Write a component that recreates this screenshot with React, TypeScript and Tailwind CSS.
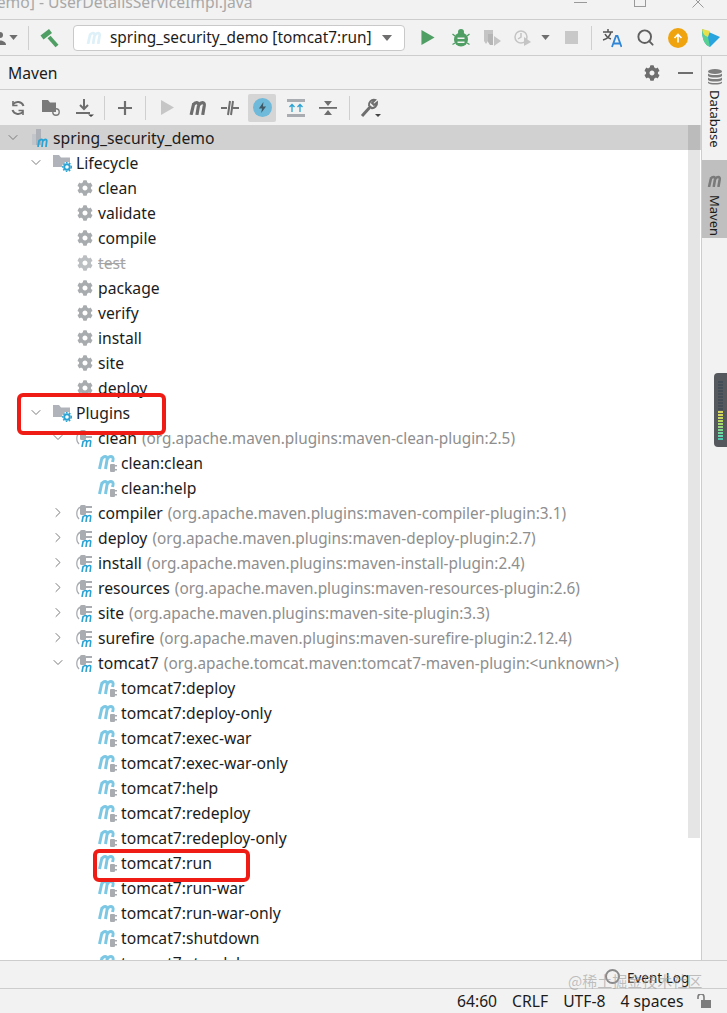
import { ChevronDown, ChevronRight, Search } from 'lucide-react'
import React from 'react'
import { FaCog } from 'react-icons/fa'

type Row = {
  level: 0 | 1 | 2 | 3
  name: string
  detail?: string
  icon: 'module' | 'folder' | 'gear' | 'plugin' | 'goal'
  open?: boolean
  closed?: boolean
  muted?: boolean
}

const rows: Row[] = [
  { level: 0, name: 'spring_security_demo', icon: 'module', open: true },
  { level: 1, name: 'Lifecycle', icon: 'folder', open: true },
  { level: 2, name: 'clean', icon: 'gear' },
  { level: 2, name: 'validate', icon: 'gear' },
  { level: 2, name: 'compile', icon: 'gear' },
  { level: 2, name: 'test', icon: 'gear', muted: true },
  { level: 2, name: 'package', icon: 'gear' },
  { level: 2, name: 'verify', icon: 'gear' },
  { level: 2, name: 'install', icon: 'gear' },
  { level: 2, name: 'site', icon: 'gear' },
  { level: 2, name: 'deploy', icon: 'gear' },
  { level: 1, name: 'Plugins', icon: 'folder', open: true },
  { level: 2, name: 'clean', detail: '(org.apache.maven.plugins:maven-clean-plugin:2.5)', icon: 'plugin', open: true },
  { level: 3, name: 'clean:clean', icon: 'goal' },
  { level: 3, name: 'clean:help', icon: 'goal' },
  { level: 2, name: 'compiler', detail: '(org.apache.maven.plugins:maven-compiler-plugin:3.1)', icon: 'plugin', closed: true },
  { level: 2, name: 'deploy', detail: '(org.apache.maven.plugins:maven-deploy-plugin:2.7)', icon: 'plugin', closed: true },
  { level: 2, name: 'install', detail: '(org.apache.maven.plugins:maven-install-plugin:2.4)', icon: 'plugin', closed: true },
  { level: 2, name: 'resources', detail: '(org.apache.maven.plugins:maven-resources-plugin:2.6)', icon: 'plugin', closed: true },
  { level: 2, name: 'site', detail: '(org.apache.maven.plugins:maven-site-plugin:3.3)', icon: 'plugin', closed: true },
  { level: 2, name: 'surefire', detail: '(org.apache.maven.plugins:maven-surefire-plugin:2.12.4)', icon: 'plugin', closed: true },
  { level: 2, name: 'tomcat7', detail: '(org.apache.tomcat.maven:tomcat7-maven-plugin:<unknown>)', icon: 'plugin', open: true },
  { level: 3, name: 'tomcat7:deploy', icon: 'goal' },
  { level: 3, name: 'tomcat7:deploy-only', icon: 'goal' },
  { level: 3, name: 'tomcat7:exec-war', icon: 'goal' },
  { level: 3, name: 'tomcat7:exec-war-only', icon: 'goal' },
  { level: 3, name: 'tomcat7:help', icon: 'goal' },
  { level: 3, name: 'tomcat7:redeploy', icon: 'goal' },
  { level: 3, name: 'tomcat7:redeploy-only', icon: 'goal' },
  { level: 3, name: 'tomcat7:run', icon: 'goal' },
  { level: 3, name: 'tomcat7:run-war', icon: 'goal' },
  { level: 3, name: 'tomcat7:run-war-only', icon: 'goal' },
  { level: 3, name: 'tomcat7:shutdown', icon: 'goal' },
  { level: 3, name: 'tomcat7:standalone', icon: 'goal' },
]

const levelPadding = {
  0: 'pl-[5px]',
  1: 'pl-[28px]',
  2: 'pl-[50px]',
  3: 'pl-[73px]',
}

function MavenM({ className, stroke = '#7cc7e4' }: { className?: string; stroke?: string }) {
  return (
    <svg viewBox="0 0 18 14" className={className} fill="none" stroke={stroke} strokeWidth="3">
      <path d="M2 14 L4.5 3 M4 4.5 C6 1.5 9.5 1.5 9 5 L7.5 14 M9.5 4.5 C11.5 1.5 15 1.5 14.5 5 L13 14" />
    </svg>
  )
}

function GoalIcon() {
  return (
    <svg viewBox="0 0 19 18" className="h-[18px] w-[19px]">
      <path d="M1.5 15 L4 3.5 M3.5 5.5 C5.5 1.5 10 1.5 9 6 L7.5 15 M9 5.5 C11 1.5 16 1.5 15 6 L14.5 8" fill="none" stroke="#7cc7e4" strokeWidth="3" />
      <rect x="12" y="10" width="5" height="8" rx="1" fill="#a9adb2" />
      <rect x="17" y="11" width="2" height="1.5" fill="#a9adb2" />
      <rect x="17" y="15" width="2" height="1.5" fill="#a9adb2" />
    </svg>
  )
}

function PluginIcon() {
  return (
    <svg viewBox="0 0 18 18" className="h-[18px] w-[18px]">
      <path d="M5 3 C1 4 0 9 1.5 13 L3 15" fill="none" stroke="#a9adb2" strokeWidth="1.3" />
      <rect x="4" y="1" width="6" height="10" rx="1.5" fill="#a9adb2" />
      <rect x="10" y="2" width="6" height="2" fill="#a9adb2" />
      <rect x="10" y="7" width="6" height="2" fill="#a9adb2" />
      <path d="M6 18 L7.2 12 M7 13 C8.5 11 11 11 10.7 13 L10 18 M11 13 C12.5 11 15 11 14.7 13 L14 18" fill="none" stroke="#2aa3d4" strokeWidth="1.6" />
    </svg>
  )
}

function ModuleIcon() {
  return (
    <svg viewBox="0 0 18 18" className="h-[18px] w-[18px]">
      <rect x="1" y="5" width="4" height="11" fill="#c2c6cb" />
      <rect x="5" y="0" width="5" height="16" fill="#aeb2b8" />
      <path d="M7 18 L8.2 11 M8 12 C9.5 10 12 10 11.7 12 L11 18 M12 12 C13.5 10 16 10 15.7 12 L15 18" fill="none" stroke="#2aa3d4" strokeWidth="1.8" />
    </svg>
  )
}

function FolderIcon() {
  return (
    <svg viewBox="0 0 19 18" className="h-[18px] w-[19px]">
      <path d="M0 1 H6 L8 3.5 H17 V13 H0 Z" fill="#b0b4ba" />
      <circle cx="14" cy="13" r="5" fill="white" />
      <circle cx="14" cy="13" r="2.8" fill="none" stroke="#2aa3d4" strokeWidth="2" />
      <circle cx="14" cy="13" r="4.4" fill="none" stroke="#2aa3d4" strokeWidth="1.2" strokeDasharray="1.6 1.6" />
    </svg>
  )
}

function TreeIcon({ icon, muted }: { icon: Row['icon']; muted?: boolean }) {
  if (icon === 'module') return <ModuleIcon />
  if (icon === 'folder') return <FolderIcon />
  if (icon === 'plugin') return <PluginIcon />
  if (icon === 'goal') return <GoalIcon />
  return <FaCog className={muted ? 'mr-[1px] h-[16px] w-[16px] text-[#bcbfc2]' : 'mr-[1px] h-[16px] w-[16px] text-[#a9acaf]'} />
}

function TreeRow({ row, selected }: { row: Row; selected: boolean }) {
  return (
    <div className={`flex h-[25px] shrink-0 items-center whitespace-nowrap ${levelPadding[row.level]} ${selected ? 'bg-[#d1d1d1]' : ''}`}>
      <span className="flex w-[16px] justify-center text-[#7b7b7b]">
        {row.open && <ChevronDown className="h-[17px] w-[17px]" strokeWidth={1.5} />}
        {row.closed && <ChevronRight className="h-[17px] w-[17px]" strokeWidth={1.5} />}
      </span>
      <span className="flex w-[32px] justify-end pr-[4px]">
        <TreeIcon icon={row.icon} muted={row.muted} />
      </span>
      <span className={row.muted ? 'mt-[2px] text-[#a5a5a5] line-through' : 'mt-[2px] text-[#1c1c1c]'}>{row.name}</span>
      {row.detail && <span className="ml-[5px] mt-[2px] text-[15.35px] text-[#8e8e8e]">{row.detail}</span>}
    </div>
  )
}

function Separator({ className }: { className: string }) {
  return <span className={`h-[24px] w-px bg-[#cfcfcf] ${className}`} />
}

function TitleBar() {
  return (
    <div className="flex h-[20px] shrink-0 items-start justify-between overflow-hidden border-b border-[#cdcdcd] bg-[#f2f2f2]">
      <span className="ml-[-13px] mt-[-8px] whitespace-nowrap leading-[20px] text-[#a8a8a8]">demo] - UserDetailsServiceImpl.java</span>
      <div className="mr-[23px] flex items-start">
        <span className="mt-[2px] h-px w-[13px] bg-[#999]" />
        <span className="ml-[47px] mt-[-8px] h-[15px] w-[12px] border border-[#999]" />
        <svg viewBox="0 0 12 12" className="ml-[46px] mt-[-4px] h-[12px] w-[12px]" fill="none" stroke="#999" strokeWidth="1">
          <path d="M0.5 0.5 L11.5 11.5 M11.5 0.5 L0.5 11.5" />
        </svg>
      </div>
    </div>
  )
}

function TopToolbar() {
  return (
    <div className="flex h-[36px] shrink-0 items-center border-b border-[#cdcdcd]">
      <svg viewBox="0 0 16 16" className="ml-[-8px] h-[16px] w-[16px]" fill="#6e6e6e">
        <circle cx="8" cy="5" r="3" />
        <path d="M2 15 C2 9 14 9 14 15 Z" />
      </svg>
      <svg viewBox="0 0 10 6" className="ml-[1px] h-[5px] w-[9px]" fill="#6e6e6e"><path d="M0 0 H10 L5 6 Z" /></svg>
      <Separator className="ml-[10px]" />
      <svg viewBox="0 0 20 20" className="ml-[11px] h-[20px] w-[20px]" fill="none" stroke="#4f9e63">
        <path d="M9 9 L17 18" strokeWidth="4" />
        <path d="M2 9.5 L10.5 3" strokeWidth="5" />
      </svg>
      <div className="ml-[13px] flex h-[26px] w-[332px] items-center rounded-[4px] border border-[#c9c9c9] bg-white pl-[12px]">
        <MavenM className="h-[13px] w-[17px]" stroke="#dff1f8" />
        <span className="ml-[7px] whitespace-nowrap text-[15.4px] text-[#1c1c1c]">spring_security_demo [tomcat7:run]</span>
        <svg viewBox="0 0 10 6" className="ml-auto mr-[12px] h-[6px] w-[10px]" fill="#6e6e6e"><path d="M0 0 H10 L5 6 Z" /></svg>
      </div>
      <svg viewBox="0 0 14 16" className="ml-[16px] h-[15px] w-[14px]" fill="#4f9e63"><path d="M0 0 L14 8 L0 16 Z" /></svg>
      <svg viewBox="0 0 18 18" className="ml-[17px] h-[18px] w-[18px]" fill="#4f9e63">
        <ellipse cx="9" cy="10.5" rx="7" ry="7" />
        <circle cx="9" cy="3" r="3" />
        <path d="M0.5 5 L3 7 M17.5 5 L15 7 M0.5 15.5 L3 14 M17.5 15.5 L15 14" stroke="#4f9e63" strokeWidth="1.4" />
        <path d="M5.5 8.5 H12.5 V10 H5.5 Z M5.5 12.5 H12.5 V14 H5.5 Z" fill="#f2f2f2" />
      </svg>
      <svg viewBox="0 0 18 18" className="ml-[13px] h-[18px] w-[18px]" fill="#c4c4c4">
        <path d="M1 1 H10 V5 H5 V12 L3 15 L1 12 Z" />
        <path d="M5 5 H10 V16 H7 L5 13 Z" fill="#b5b5b5" />
        <path d="M11 7 L18 12 L11 17 Z" />
      </svg>
      <svg viewBox="0 0 18 18" className="ml-[13px] h-[18px] w-[18px]" fill="none" stroke="#c4c4c4" strokeWidth="1.5">
        <circle cx="7" cy="8" r="6" />
        <path d="M7 4 V8 L4 10" />
        <path d="M10 8 L17 13 L10 17 Z" fill="#c4c4c4" stroke="none" />
      </svg>
      <svg viewBox="0 0 10 6" className="ml-[9px] h-[5px] w-[9px]" fill="#6e6e6e"><path d="M0 0 H10 L5 6 Z" /></svg>
      <span className="ml-[15px] h-[13px] w-[13px] bg-[#c8c8c8]" />
      <Separator className="ml-[13px]" />
      <svg viewBox="0 0 20 20" className="ml-[10px] h-[20px] w-[20px]">
        <path d="M1 4 H11 M6 1 V4 M9 4 C8 8 5 11 1 12 M3 6 C4 8 6 10 9 11" fill="none" stroke="#555" strokeWidth="1.5" />
        <path d="M10 19 L14 8 H15.5 L19.5 19 M11.5 15.5 H18" fill="none" stroke="#2f86d6" strokeWidth="1.8" />
      </svg>
      <Search className="ml-[14px] h-[19px] w-[19px] text-[#5f5f5f]" strokeWidth={2.4} />
      <span className="ml-[13px] flex h-[20px] w-[20px] items-center justify-center rounded-full bg-[#efa30f]">
        <svg viewBox="0 0 10 10" className="h-[10px] w-[10px]" fill="none" stroke="white" strokeWidth="1.6">
          <path d="M5 9.5 V1.5 M1.5 5 L5 1.5 L8.5 5" />
        </svg>
      </span>
      <svg viewBox="0 0 20 20" className="ml-[13px] h-[20px] w-[20px]">
        <path d="M1 1 L19 9 L9 19 C4 17 1 12 1 1 Z" fill="#27a3dd" />
        <path d="M1 1 C2 6 3 8 7 9 L9 19 C4 17 1 12 1 1 Z" fill="#58d08f" />
        <path d="M1 1 L9 3 L7 9 C3 8 2 6 1 1 Z" fill="#e8e04a" />
      </svg>
    </div>
  )
}

function MavenToolbar() {
  return (
    <div className="flex h-[35px] shrink-0 items-center text-[#6e6e6e]">
      <svg viewBox="0 0 16 16" className="ml-[10px] h-[16px] w-[16px]" fill="none" stroke="#6e6e6e" strokeWidth="2">
        <path d="M13.5 6 A6 6 0 0 0 3 4.5 M2.5 10 A6 6 0 0 0 13 11.5" />
        <path d="M3 1 V5.5 H7.5 M13 15 V10.5 H8.5" strokeWidth="1.6" />
      </svg>
      <svg viewBox="0 0 20 18" className="ml-[15px] h-[18px] w-[20px]">
        <path d="M1 1 H7 L9 3.5 H15 V13 H1 Z" fill="#7a7a7a" />
        <circle cx="15" cy="13" r="3.2" fill="none" stroke="#7a7a7a" strokeWidth="1.4" />
      </svg>
      <svg viewBox="0 0 20 18" className="ml-[14px] h-[18px] w-[20px]" fill="none" stroke="#6e6e6e" strokeWidth="2">
        <path d="M9 0 V9 M5 6 L9 10 L13 6 M1 14 H15" />
        <path d="M13 15.5 H19 L16 18 Z" fill="#444" stroke="none" />
      </svg>
      <Separator className="ml-[9px]" />
      <svg viewBox="0 0 14 14" className="ml-[13px] h-[14px] w-[14px]" fill="none" stroke="#6e6e6e" strokeWidth="2.2">
        <path d="M7 0 V14 M0 7 H14" />
      </svg>
      <Separator className="ml-[13px]" />
      <svg viewBox="0 0 14 16" className="ml-[15px] h-[15px] w-[13px]" fill="#c6c6c6"><path d="M0 0 L14 8 L0 16 Z" /></svg>
      <MavenM className="ml-[15px] h-[15px] w-[19px]" stroke="#6e6e6e" />
      <svg viewBox="0 0 20 16" className="ml-[12px] h-[16px] w-[20px]" fill="none" stroke="#6e6e6e" strokeWidth="2">
        <path d="M1 8 H7 M13 8 H19" />
        <path d="M8 15 L10 1 M11 15 L13 1" />
      </svg>
      <span className="ml-[8px] flex h-[28px] w-[28px] items-center justify-center rounded-[2px] bg-[#d5d5d5]">
        <span className="flex h-[19px] w-[19px] items-center justify-center rounded-full bg-[#6fb9da]">
          <svg viewBox="0 0 10 12" className="h-[11px] w-[9px]" fill="#3f5966"><path d="M6 0 L1 7 H4.5 L3.5 12 L9 5 H5.5 Z" /></svg>
        </span>
      </span>
      <svg viewBox="0 0 20 20" className="ml-[10px] h-[20px] w-[20px]" fill="none">
        <rect x="1" y="1" width="18" height="3" fill="#a9adb2" />
        <rect x="1" y="16" width="18" height="3" fill="#a9adb2" />
        <path d="M6 14 V7 M3.5 9 L6 6.5 L8.5 9 M14 14 V7 M11.5 9 L14 6.5 L16.5 9" stroke="#2aa3d4" strokeWidth="1.3" />
      </svg>
      <svg viewBox="0 0 18 18" className="ml-[13px] h-[18px] w-[18px]" fill="#6e6e6e">
        <rect x="0" y="8" width="18" height="1.8" />
        <path d="M9 7 L5 2 H13 Z M9 11 L13 16 H5 Z" />
      </svg>
      <Separator className="ml-[12px]" />
      <svg viewBox="0 0 22 20" className="ml-[10px] h-[20px] w-[22px]" fill="none" stroke="#6e6e6e" strokeWidth="3">
        <path d="M2 18 L11 8" />
        <path d="M9 8 A5 5 0 0 1 15 2 L12 5 L14 7 L17 4.5 A5 5 0 0 1 11 10" strokeWidth="2" />
        <path d="M15 16 H21 L18 19 Z" fill="#444" stroke="none" />
      </svg>
    </div>
  )
}

function SideStripe() {
  return (
    <div className="flex w-[26px] shrink-0 flex-col border-l border-[#cdcdcd] bg-[#f2f2f2] text-[13px] text-[#1c1c1c]">
      <div className="flex h-[104px] flex-col items-center pt-[13px]">
        <svg viewBox="0 0 16 16" className="h-[16px] w-[16px]" fill="#7d7d7d">
          <ellipse cx="8" cy="2.5" rx="7" ry="2.5" />
          <path d="M1 4.5 C3 6.5 13 6.5 15 4.5 V7 C13 9 3 9 1 7 Z" />
          <path d="M1 8.5 C3 10.5 13 10.5 15 8.5 V11 C13 13 3 13 1 11 Z" />
          <path d="M1 12.5 C3 14.5 13 14.5 15 12.5 V14 C13 16 3 16 1 14 Z" />
        </svg>
        <span className="mt-[5px] leading-none [writing-mode:vertical-rl]">Database</span>
      </div>
      <div className="flex h-[78px] flex-col items-center bg-[#bfbfbf] pt-[15px]">
        <MavenM className="h-[12px] w-[16px]" stroke="#7a7a7a" />
        <span className="mt-[8px] leading-none [writing-mode:vertical-rl]">Maven</span>
      </div>
    </div>
  )
}

export default function App() {
  return (
    <div className="relative flex h-[1013px] w-[727px] flex-col overflow-hidden bg-[#f2f2f2] font-['Noto_Sans',sans-serif] text-[15.7px]">
      <TitleBar />
      <TopToolbar />
      <div className="flex min-h-0 flex-1">
        <div className="flex min-w-0 flex-1 flex-col">
          <div className="flex h-[34px] shrink-0 items-center justify-between border-b border-[#cdcdcd] pl-[8px] pr-[8px]">
            <span className="mt-[2px] text-[#1c1c1c]">Maven</span>
            <div className="flex items-center gap-[18px] text-[#6e6e6e]">
              <FaCog className="h-[16px] w-[16px]" />
              <span className="h-[2px] w-[15px] bg-[#6e6e6e]" />
            </div>
          </div>
          <MavenToolbar />
          <div className="relative flex min-h-0 flex-1 flex-col overflow-hidden bg-white">
            {rows.map((row, index) => (
              <TreeRow key={`${row.name}-${index}`} row={row} selected={index === 0} />
            ))}
            <div className="absolute right-[1px] top-0 h-[713px] w-[12px] bg-black/10" />
          </div>
        </div>
        <SideStripe />
      </div>
      <div className="h-[28px] shrink-0 border-t border-[#cdcdcd] bg-[#f2f2f2]">
        <div className="flex h-full items-center pl-[605px] pt-[4px] text-[13.5px] text-[#1c1c1c]">
          <span className="h-[15px] w-[15px] rounded-full border-2 border-[#8a8a8a]" />
          <span className="ml-[7px] mt-[4px]">Event Log</span>
        </div>
      </div>
      <div className="flex h-[25px] shrink-0 items-center border-t border-[#cdcdcd] bg-[#f2f2f2] pl-[457px] text-[#1c1c1c]">
        <span className="mt-[2px]">64:60</span>
        <span className="ml-[15px] mt-[2px]">CRLF</span>
        <span className="ml-[15px] mt-[2px]">UTF-8</span>
        <span className="ml-[15px] mt-[2px]">4 spaces</span>
        <svg viewBox="0 0 14 14" className="ml-[14px] h-[14px] w-[14px]" fill="#7d7d7d">
          <path d="M1 5 V3 A3 3 0 0 1 7 3 V6" fill="none" stroke="#7d7d7d" strokeWidth="1.6" />
          <rect x="4" y="6" width="10" height="8" />
        </svg>
      </div>

      {/* red annotations and overlays */}
      <div className="absolute left-[17px] top-[393px] h-[42px] w-[149px] rounded-[6px] border-[4px] border-[#ee1c14]" />
      <div className="absolute left-[93px] top-[849px] h-[33px] w-[157px] rounded-[6px] border-[4px] border-[#ee1c14]" />
      <span className="absolute left-[568px] top-[971px] font-['Noto_Sans_CJK_SC',sans-serif] text-[15px] leading-[20px] text-[#9a9a9a]/60">@稀土掘金技术社区</span>
      <div className="absolute left-[714px] top-[373px] flex h-[74px] w-[13px] flex-col items-center gap-[1px] rounded-l-[4px] bg-[#55585c] pb-[3px] pt-[8px]">
        {['#444c55', '#444c55', '#444c55', '#444c55', '#444c55', '#444c55', '#444c55', '#444c55', '#444c55', '#444c55', '#d8d860', '#d8d860', '#c8d860', '#b8d860', '#a8d870', '#98d880', '#80d890', '#70d8a0', '#60d8b0', '#50c8b0'].map((color, i) => (
          <span key={i} className="h-[2px] w-[5px]" style={{ backgroundColor: color }} />
        ))}
      </div>
    </div>
  )
}
